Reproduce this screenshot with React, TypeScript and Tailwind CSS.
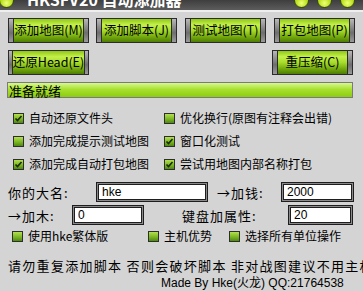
import React from "react";

const cjk = { fontFamily: '"Noto Sans CJK SC", "Liberation Sans", sans-serif' };

function GBtn({ label, w }: { label: string; w: string }) {
  return (
    <div className={`flex h-[25px] ${w} border border-[#2b2b2b] bg-[#2b2b2b]`}>
      <div className="w-[4px] h-full bg-[linear-gradient(to_bottom,#b8b8b8,#6e6e6e_60%,#9a9a9a)]" />
      <div className="flex-1 h-full mx-[1px] flex items-center justify-center text-[12.5px] whitespace-nowrap text-black bg-[linear-gradient(to_bottom,#8fc814_0%,#c4f04c_25%,#a6dc2a_50%,#6fa40c_80%,#4f7e04_100%)]">
        {label}
      </div>
      <div className="w-[4px] h-full bg-[linear-gradient(to_bottom,#b8b8b8,#6e6e6e_60%,#9a9a9a)]" />
    </div>
  );
}

function Box({ checked }: { checked: boolean }) {
  return (
    <div className="w-[11px] h-[11px] border border-[#2e2e2e] bg-[linear-gradient(to_bottom,#b4e050,#7cb624_55%,#4e8a10)] flex items-center justify-center shrink-0">
      {checked && (
        <svg width="9" height="9" viewBox="0 0 9 9">
          <polyline points="1.5,4.5 3.5,6.5 7.5,2" fill="none" stroke="#1a2a00" strokeWidth="1.6" />
        </svg>
      )}
    </div>
  );
}

function Check({ checked, label }: { checked: boolean; label: string }) {
  return (
    <div className="flex items-center gap-[5px] text-[12px] leading-none text-black whitespace-nowrap">
      <Box checked={checked} />
      <span>{label}</span>
    </div>
  );
}

function Field({ value, w }: { value: string; w: string }) {
  return (
    <div className={`${w} h-[20px] border border-[#1e1e1e] bg-[#8a8a8a] p-[1px]`}>
      <div className="w-full h-full border border-[#1e1e1e] bg-white flex items-center pl-[3px] text-[12px] leading-none text-black tracking-normal" style={{ fontFamily: '"Liberation Sans", sans-serif' }}>
        {value}
      </div>
    </div>
  );
}

function Lamp() {
  return (
    <div className="w-[15px] h-[15px] rounded-full border border-[#3a4a10] bg-[radial-gradient(circle_at_50%_70%,#f2ff7a,#b8e01c_50%,#6c9a08)]" />
  );
}

export default function App() {
  return (
    <div className="w-[363px] h-[291px] bg-[#d4d4d4] overflow-hidden flex flex-col" style={cjk}>
      {/* title bar */}
      <div className="relative h-[10px] shrink-0 bg-[linear-gradient(to_bottom,#3e3e3e,#5c5c5c)] overflow-hidden">
        <div className="absolute left-[-1px] top-[-7px]"><Lamp /></div>
        <div className="absolute left-[27px] top-[-9px] text-[16px] font-bold text-white whitespace-nowrap leading-none">HKSFV20 自动添加器</div>
        <div className="absolute left-[294px] top-[-7px] flex gap-[8px]">
          <Lamp />
          <Lamp />
          <Lamp />
        </div>
      </div>
      <div className="h-[2px] shrink-0 bg-[#eeeeee]" />

      {/* buttons */}
      <div className="flex pl-[8px] mt-[6px] gap-[7px]">
        <GBtn label="添加地图(M)" w="w-[81px]" />
        <GBtn label="添加脚本(J)" w="w-[81px]" />
        <div className="ml-[1px]"><GBtn label="测试地图(T)" w="w-[81px]" /></div>
        <div className="ml-[1px]"><GBtn label="打包地图(P)" w="w-[81px]" /></div>
      </div>
      <div className="flex pl-[8px] mt-[7px] justify-between pr-[10px]">
        <GBtn label="还原Head(E)" w="w-[81px]" />
        <GBtn label="重压缩(C)" w="w-[81px]" />
      </div>

      {/* status */}
      <div className="ml-[7px] mt-[7px] w-[346px] h-[16px] border border-[#7a7a7a] bg-[linear-gradient(to_bottom,#d8f890,#a8e030_45%,#8ccc10)] flex items-center pl-[1px] text-[13px] leading-none text-black">
        准备就绪
      </div>

      {/* checkboxes */}
      <div className="grid grid-cols-[151px_1fr] pl-[13px] mt-[14px] gap-y-[11px]">
        <Check checked label="自动还原文件头" />
        <Check checked={false} label="优化换行(原图有注释会出错)" />
        <Check checked={false} label="添加完成提示测试地图" />
        <Check checked label="窗口化测试" />
        <Check checked label="添加完成自动打包地图" />
        <Check checked label="尝试用地图内部名称打包" />
      </div>

      {/* fields */}
      <div className="flex items-center mt-[12px] text-[13px] leading-none text-black tracking-[1px]">
        <span className="ml-[8px] w-[88px]">你的大名:</span>
        <Field value="hke" w="w-[112px]" />
        <span className="ml-[9px] w-[64px]">→加钱:</span>
        <Field value="2000" w="w-[73px]" />
      </div>
      <div className="flex items-center mt-[3px] text-[13px] leading-none text-black tracking-[1px]">
        <span className="ml-[8px] w-[64px]">→加木:</span>
        <Field value="0" w="w-[72px]" />
        <span className="ml-[38px] w-[106px]">键盘加属性:</span>
        <Field value="20" w="w-[65px]" />
      </div>

      {/* bottom checks */}
      <div className="flex mt-[5px] pl-[12px]">
        <div className="w-[136px]"><Check checked={false} label="使用hke繁体版" /></div>
        <div className="w-[81px]"><Check checked={false} label="主机优势" /></div>
        <Check checked={false} label="选择所有单位操作" />
      </div>

      <div className="mt-[17px] ml-[8px] text-[13px] leading-none text-black tracking-[1.3px] whitespace-nowrap">
        请勿重复添加脚本 否则会破坏脚本 非对战图建议不用主机优势
      </div>
      <div className="mt-[5px] ml-[161px] text-[12px] leading-none text-black whitespace-nowrap" style={{ fontFamily: '"Liberation Sans", "Noto Sans CJK SC", sans-serif' }}>
        Made By Hke(火龙) QQ:21764538
      </div>
    </div>
  );
}
